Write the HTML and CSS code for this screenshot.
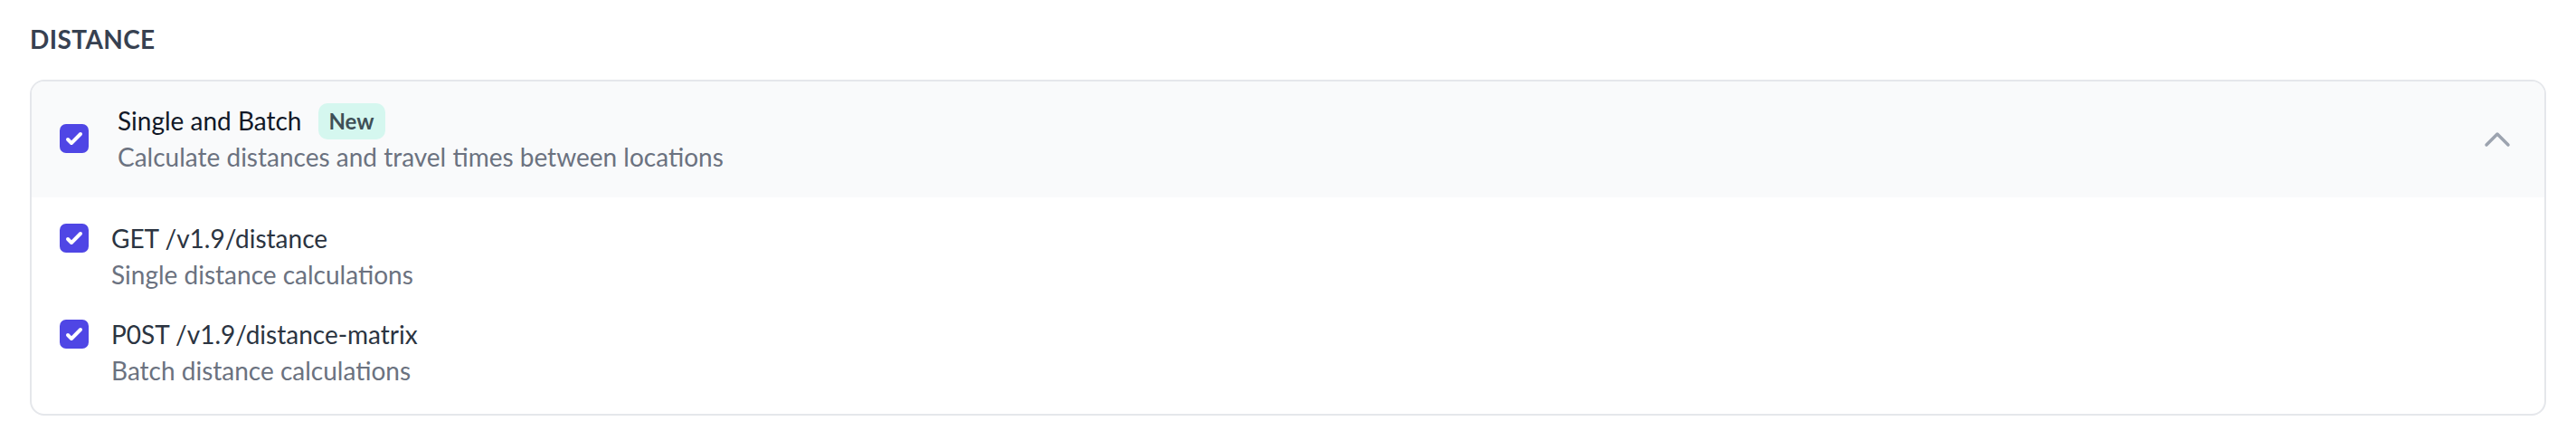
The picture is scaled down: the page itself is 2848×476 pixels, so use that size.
FILE: index.html
```html
<!DOCTYPE html>
<html lang="en">
<head>
<meta charset="utf-8">
<title>Distance</title>
<link rel="stylesheet" href="styles.css">
</head>
<body>
<main class="page">
  <h2 class="section-title">DISTANCE</h2>
  <section class="card">
    <div class="card-header">
      <span class="checkbox">
        <svg viewBox="0 0 16 16" aria-hidden="true"><path fill="#fff" d="M12.207 4.793a1 1 0 010 1.414l-5 5a1 1 0 01-1.414 0l-2-2a1 1 0 011.414-1.414L6.5 9.086l4.293-4.293a1 1 0 011.414 0z"/></svg>
      </span>
      <div class="header-text">
        <div class="header-title-row">
          <span class="header-title">Single and Batch</span>
          <span class="badge">New</span>
        </div>
        <div class="header-desc">Calculate distances and travel times between locations</div>
      </div>
      <svg class="chevron" viewBox="0 0 40 40" aria-hidden="true"><polyline points="8,27 20,15 32,27" fill="none" stroke="#9ca3af" stroke-width="3.5" stroke-linecap="round" stroke-linejoin="round"/></svg>
    </div>
    <div class="card-body">
      <div class="item">
        <span class="checkbox item-checkbox">
          <svg viewBox="0 0 16 16" aria-hidden="true"><path fill="#fff" d="M12.207 4.793a1 1 0 010 1.414l-5 5a1 1 0 01-1.414 0l-2-2a1 1 0 011.414-1.414L6.5 9.086l4.293-4.293a1 1 0 011.414 0z"/></svg>
        </span>
        <div class="item-text">
          <div class="item-title">GET /v1.9/distance</div>
          <div class="item-desc">Single distance calculations</div>
        </div>
      </div>
      <div class="item">
        <span class="checkbox item-checkbox">
          <svg viewBox="0 0 16 16" aria-hidden="true"><path fill="#fff" d="M12.207 4.793a1 1 0 010 1.414l-5 5a1 1 0 01-1.414 0l-2-2a1 1 0 011.414-1.414L6.5 9.086l4.293-4.293a1 1 0 011.414 0z"/></svg>
        </span>
        <div class="item-text">
          <div class="item-title">P0ST /v1.9/distance-matrix</div>
          <div class="item-desc">Batch distance calculations</div>
        </div>
      </div>
    </div>
  </section>
</main>
</body>
</html>
```

FILE: styles.css
```css
* { box-sizing: border-box; }

html, body {
  margin: 0;
  padding: 0;
  background: #ffffff;
}

body {
  font-family: Lato, "Open Sans", "Liberation Sans", sans-serif;
  -webkit-font-smoothing: antialiased;
}

.page {
  padding: 23px 33px 0 33px;
}

.section-title {
  margin: 0 0 25px 0;
  font-size: 28px;
  line-height: 40px;
  font-weight: 700;
  color: #374151;
  letter-spacing: 0.4px;
}

.card {
  border: 2px solid #e5e7eb;
  border-radius: 16px;
  overflow: hidden;
  background: #ffffff;
}

.card-header {
  display: flex;
  align-items: center;
  gap: 32px;
  padding: 23px 32px 25px 31px;
  background: #f9fafb;
}

.checkbox {
  flex: none;
  width: 32px;
  height: 32px;
  border-radius: 7px;
  background: #4f46e5;
  display: flex;
  align-items: center;
  justify-content: center;
}

.checkbox svg {
  width: 32px;
  height: 32px;
  display: block;
}

.header-text {
  flex: 1;
  min-width: 0;
}

.header-title-row {
  display: flex;
  align-items: center;
  gap: 18px;
  height: 40px;
}

.header-title {
  font-size: 28px;
  line-height: 40px;
  color: #111827;
}

.badge {
  display: inline-flex;
  align-items: center;
  height: 40px;
  padding: 0 12px;
  border-radius: 10px;
  background: #d5f7ef;
  color: #3f5057;
  font-size: 24px;
  font-weight: 700;
  line-height: 32px;
  margin-top: 2px;
}

.header-desc {
  font-size: 28px;
  line-height: 40px;
  color: #6b7280;
}

.chevron {
  flex: none;
  width: 40px;
  height: 40px;
  display: block;
}

.card-body {
  display: flex;
  flex-direction: column;
  gap: 26px;
  padding: 25px 32px 28px 31px;
}

.item {
  display: flex;
  align-items: flex-start;
  gap: 25px;
}

.item-checkbox {
  margin-top: 4px;
}

.item-title {
  font-size: 28px;
  line-height: 40px;
  color: #2b3441;
}

.item-desc {
  font-size: 28px;
  line-height: 40px;
  color: #6b7280;
}
```
